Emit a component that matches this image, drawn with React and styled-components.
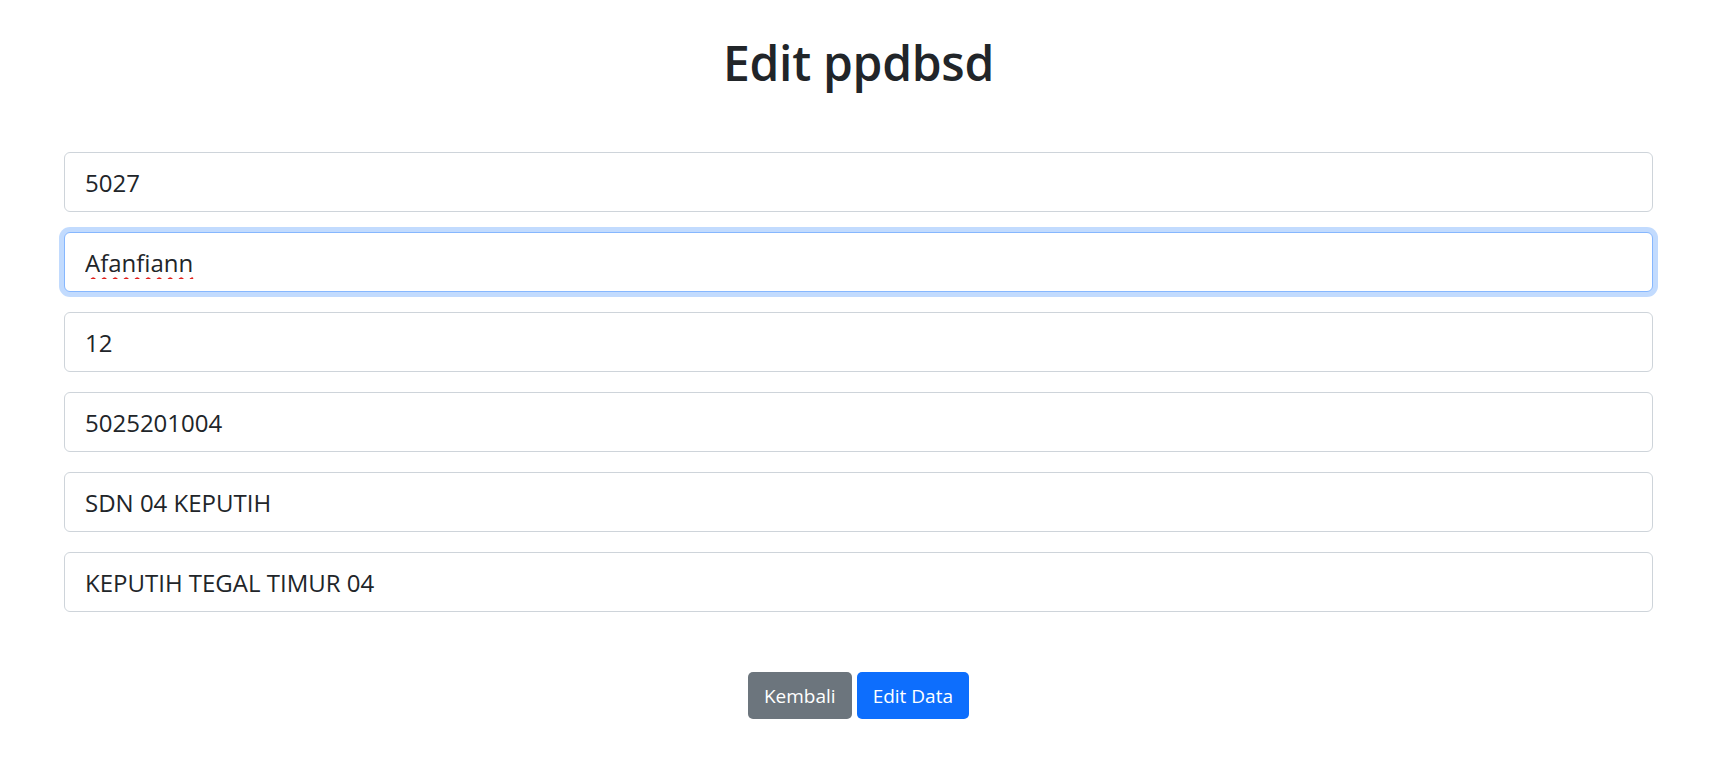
import React, { useState } from 'react';
import styled, { createGlobalStyle, css } from 'styled-components';

const GlobalStyle = createGlobalStyle`
  * { box-sizing: border-box; }
  body {
    margin: 0;
    background: #fff;
    color: #212529;
    font-family: 'Open Sans', 'Noto Sans', sans-serif;
  }
`;

const Page = styled.div`
  padding: 33px 72px 40px 64px;
`;

const Title = styled.h1`
  margin: 0 0 59px;
  text-align: center;
  font-size: 48px;
  line-height: 60px;
  font-weight: 600;
  color: #212529;
  letter-spacing: -0.3px;
`;

const Form = styled.form`
  display: flex;
  flex-direction: column;
`;

const Fields = styled.div`
  display: flex;
  flex-direction: column;
  gap: 20px;
`;

const Input = styled.input`
  display: block;
  width: 100%;
  height: 60px;
  padding: 10px 20px;
  font-family: inherit;
  font-size: 24px;
  color: #212529;
  background: #fff;
  border: 1px solid #ced4da;
  border-radius: 6px;
  outline: none;

  ${p => p.$focused && css`
    border-color: #86b7fe;
    box-shadow: 0 0 0 5px rgba(13, 110, 253, 0.25);
  `}

  ${p => p.$misspelled && css`
    text-decoration: underline wavy #e0201c;
    text-decoration-thickness: 1.5px;
    text-underline-offset: 5px;
  `}
`;

const Actions = styled.div`
  display: flex;
  justify-content: center;
  gap: 5px;
  margin-top: 60px;
`;

const Button = styled.button`
  height: 47px;
  padding: 0 15px;
  font-family: inherit;
  font-size: 19px;
  color: #fff;
  border: 1px solid transparent;
  border-radius: 5px;
  cursor: pointer;
  background: ${p => (p.$variant === 'primary' ? '#0d6efd' : '#6c757d')};
`;

const initial = [
  { name: 'id', value: '5027' },
  { name: 'nama', value: 'Afanfiann', focused: true, misspelled: true },
  { name: 'umur', value: '12' },
  { name: 'nisn', value: '5025201004' },
  { name: 'sekolah', value: 'SDN 04 KEPUTIH' },
  { name: 'alamat', value: 'KEPUTIH TEGAL TIMUR 04' },
];

const App = () => {
  const [fields, setFields] = useState(initial);

  const handleChange = (i, value) => {
    setFields(fields.map((f, idx) => (idx === i ? { ...f, value } : f)));
  };

  return (
    <>
      <GlobalStyle />
      <Page>
        <Title>Edit ppdbsd</Title>
        <Form onSubmit={e => e.preventDefault()}>
          <Fields>
            {fields.map((f, i) => (
              <Input
                key={f.name}
                type="text"
                value={f.value}
                $focused={f.focused}
                $misspelled={f.misspelled}
                onChange={e => handleChange(i, e.target.value)}
              />
            ))}
          </Fields>
          <Actions>
            <Button type="button">Kembali</Button>
            <Button type="submit" $variant="primary">Edit Data</Button>
          </Actions>
        </Form>
      </Page>
    </>
  );
};

export default App;
